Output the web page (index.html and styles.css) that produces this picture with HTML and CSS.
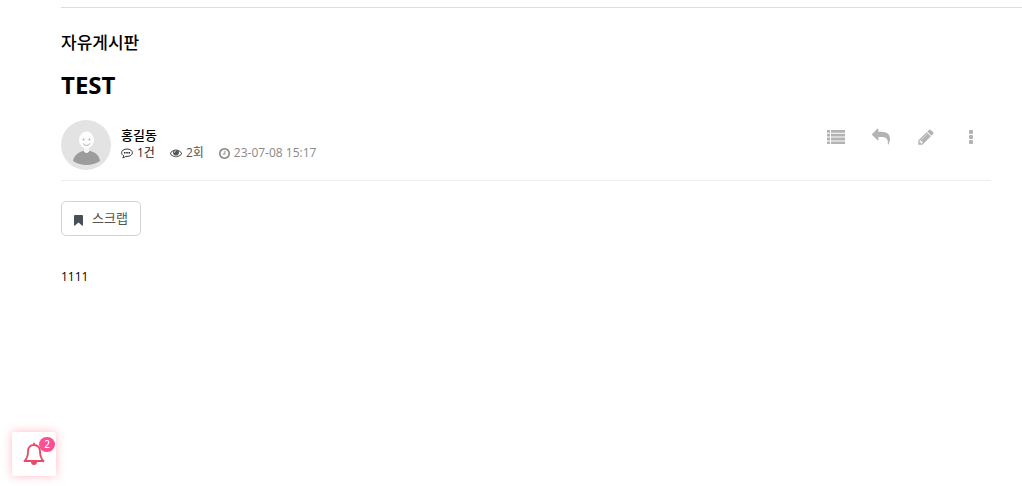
FILE: index.html
```
<!DOCTYPE html>
<html lang="ko">
<head>
<meta charset="utf-8">
<meta name="viewport" content="width=device-width, initial-scale=1">
<title>자유게시판</title>
<link rel="stylesheet" href="styles.css">
</head>
<body>
<main class="page">
  <article class="post">
    <header>
      <h2 class="board-name">자유게시판</h2>
      <h1 class="post-title">TEST</h1>
    </header>
    <section class="post-info">
      <svg class="avatar" viewBox="0 0 50 50" role="img" aria-label="프로필">
        <circle cx="25" cy="25" r="25" fill="#e3e3e3"/>
        <path d="M12 41C13 35 18 32 22 31H29C34 32 38 35 39 41Q33 45 25.500 45T12 41Z" fill="#9c9c9c"/>
        <path d="M23 25h5v6.500q-2.500 3-5 0z" fill="#f6f6f6"/>
        <ellipse cx="25.500" cy="20" rx="7.500" ry="8.500" fill="#fdfdfd"/>
        <circle cx="22.500" cy="19.500" r=".9" fill="#aaa"/><circle cx="28.500" cy="19.500" r=".9" fill="#aaa"/>
        <path d="M22 23.500q3.500 4 7 0" fill="none" stroke="#aaa" stroke-width="1"/>
      </svg>
      <div class="author-block">
        <strong class="author">홍길동</strong>
        <ul class="meta">
          <li class="comments"><svg class="meta-icon" viewBox="0 0 24 24" aria-hidden="true"><path d="M12 4C6 4 1.200 7.200 1.200 11.500c0 2.700 1.800 4.900 4.500 6.200-.3 1.700-1 2.700-2.200 4 2.600-.4 4.700-1.400 6.200-3 .7.200 1.500.2 2.300.2 6 0 10.800-3.200 10.800-7.400S18 4 12 4z" fill="none" stroke="currentColor" stroke-width="1.800"/><path d="M6 10h3v3H6zM10.500 10h3v3h-3zM15 10h3v3h-3z" fill="currentColor"/></svg>1건</li>
          <li class="views"><svg class="meta-icon" viewBox="0 0 1792 1792" aria-hidden="true"><path fill="currentColor" d="M1664 960q-152-236-381-353 61 104 61 225 0 185-131.500 316.500t-316.500 131.500-316.500-131.500-131.500-316.500q0-121 61-225-229 117-381 353 133 205 333.500 326.500t434.500 121.500 434.500-121.500 333.500-326.500zm-720-384q0-20-14-34t-34-14q-125 0-214.500 89.500t-89.500 214.500q0 20 14 34t34 14 34-14 14-34q0-86 61-147t147-61q20 0 34-14t14-34zm848 384q0 34-20 69-140 230-376.500 368.500t-499.500 138.500-499.500-139-376.500-368q-20-35-20-69t20-69q140-229 376.500-368t499.500-139 499.500 139 376.500 368q20 35 20 69z"/></svg>2회</li>
          <li class="date"><svg class="meta-icon meta-icon-clock" viewBox="128 128 1536 1536" aria-hidden="true"><path fill="currentColor" d="M1024 544v448q0 14-9 23t-23 9h-320q-14 0-23-9t-9-23v-64q0-14 9-23t23-9h224v-352q0-14 9-23t23-9h64q14 0 23 9t9 23zm416 352q0-148-73-273t-198-198-273-73-273 73-198 198-73 273 73 273 198 198 273 73 273-73 198-198 73-273zm224 0q0 209-103 385.500t-279.500 279.500-385.500 103-385.500-103-279.500-279.500-103-385.500 103-385.500 279.500-279.500 385.500-103 385.500 103 279.500 279.500 103 385.500z"/></svg><time datetime="2023-07-08T15:17">23-07-08 15:17</time></li>
        </ul>
      </div>
      <nav class="tools" aria-label="게시글 메뉴">
        <a class="tool" href="#list" aria-label="목록"><svg viewBox="0 0 18 18" aria-hidden="true"><path d="M0 2h3v2.800H0zM4 2h14v2.800H4zM0 5.800h3v2.800H0zM4 5.800h14v2.800H4zM0 9.600h3v2.800H0zM4 9.600h14v2.800H4zM0 13.400h3v2.600H0zM4 13.400h14v2.600H4z"/></svg></a>
        <a class="tool" href="#reply" aria-label="답변"><svg viewBox="0 0 1792 1792" aria-hidden="true"><path transform="matrix(-1 0 0 1 1792 0)" d="M1792 640q0 26-19 45l-512 512q-19 19-45 19t-45-19-19-45v-256h-224q-98 0-175.500 6t-154 21.500-133 42.500-105.500 69.500-80 101-48.500 138.500-17.500 181q0 55 5 123 0 6 2.500 23.500t2.500 26.500q0 15-8.500 25t-23.500 10q-16 0-28-17-7-9-13-22t-13.500-30-10.500-24q-127-285-127-451 0-199 53-333 162-403 875-403h224v-256q0-26 19-45t45-19 45 19l512 512q19 19 19 45z"/></svg></a>
        <a class="tool" href="#edit" aria-label="수정"><svg viewBox="0 0 1792 1792" aria-hidden="true"><path d="M491 1536l91-91-235-235-91 91v107h128v128h107zm523-928q0-22-22-22-10 0-17 7l-542 542q-7 7-7 17 0 22 22 22 10 0 17-7l542-542q7-7 7-17zm-54-192l416 416-832 832h-416v-416zm683 96q0 53-37 90l-166 166-416-416 166-165q36-38 90-38 53 0 91 38l235 234q37 39 37 91z"/></svg></a>
        <button class="tool" type="button" aria-label="더보기"><svg viewBox="0 0 18 18" aria-hidden="true"><rect x="7" y="2" width="4" height="4" rx="1"/><rect x="7" y="7" width="4" height="4" rx="1"/><rect x="7" y="12" width="4" height="4" rx="1"/></svg></button>
      </nav>
    </section>
    <a class="scrap" href="#scrap"><svg class="scrap-icon" viewBox="0 0 9 11" aria-hidden="true"><path d="M1 0h7q1 0 1 1v9q0 1-1 .5L4.500 7.500 1 10.500Q0 11 0 10V1Q0 0 1 0z"/></svg>스크랩</a>
    <p class="content">1111</p>
  </article>
</main>
<button class="alarm" type="button" aria-label="알림 2개">
  <svg class="bell" viewBox="0 0 22 24" aria-hidden="true"><path d="M11 1.500v1.500M11 3C7 3 5 6 5 9.500 5 14.500 3.500 17 1.500 19H20.500C18.500 17 17 14.500 17 9.500 17 6 15 3 11 3z" fill="none" stroke="currentColor" stroke-width="1.800" stroke-linejoin="round" stroke-linecap="round"/><path d="M8 19.500h6q0 3.500-3 3.500t-3-3.500z" fill="currentColor"/></svg>
  <span class="badge">2</span>
</button>
</body>
</html>
```
FILE: styles.css
```
* {
  box-sizing: border-box;
}

body {
  margin: 0;
  background: #fff;
  color: #000;
  font-family: "Open Sans", "Noto Sans CJK KR", sans-serif;
  font-size: 12px;
  line-height: 18px;
}

.page {
  margin: 7px 0 0 61px;
  border-top: 1px solid #ddd;
}

.post {
  padding: 23px 31px 0 0;
}

.board-name {
  margin: 0;
  font-size: 17px;
  font-weight: 500;
  line-height: 24px;
}

.post-title {
  margin: 13px 0 18px;
  font-size: 24px;
  font-weight: 700;
  line-height: 34px;
}

.post-info {
  display: flex;
  align-items: flex-start;
  padding-bottom: 10px;
  border-bottom: 1px solid #eee;
}

.avatar {
  width: 50px;
  height: 50px;
  margin-right: 10px;
}

.author-block {
  padding-top: 6px;
}

.author {
  display: block;
  font-size: 13px;
  font-weight: 500;
}

.meta {
  display: flex;
  flex-wrap: wrap;
  gap: 15px;
  margin: 0;
  padding: 0;
  list-style: none;
}

.meta li {
  display: flex;
  align-items: center;
  gap: 4px;
}

.meta-icon {
  width: 12px;
  height: 12px;
}

.meta-icon-clock {
  width: 11px;
  height: 11px;
}

.comments {
  color: #222;
}

.views {
  color: #555;
}

.date {
  color: #888;
}

.tools {
  display: flex;
  gap: 5px;
  margin-left: auto;
}

.tool {
  display: grid;
  place-items: center;
  width: 40px;
  height: 34px;
  padding: 0;
  border: 0;
  background: none;
}

.tool svg {
  width: 18px;
  height: 18px;
  fill: #b3b3b3;
}

.scrap {
  display: inline-flex;
  align-items: center;
  gap: 9px;
  margin-top: 20px;
  padding: 8px 12px;
  border: 1px solid #d3d3d3;
  border-radius: 5px;
  color: #555;
  font-size: 13px;
  text-decoration: none;
  line-height: 17px;
}

.scrap-icon {
  width: 9px;
  height: 11px;
  margin-top: 3px;
  fill: #484f59;
}

.content {
  margin: 32px 0 0;
}

.alarm {
  position: fixed;
  bottom: 10px;
  left: 12px;
  display: grid;
  place-items: center;
  width: 44px;
  height: 44px;
  padding: 0;
  border: 0;
  border-radius: 2px;
  background: #fff;
  box-shadow: 0 0 10px rgba(255, 60, 90, 0.35);
  color: #e64c66;
}

.bell {
  width: 22px;
  height: 24px;
}

.badge {
  position: absolute;
  top: 5px;
  right: 1px;
  width: 16px;
  border-radius: 8px;
  background: #ff4f93;
  color: #fff;
  font-family: "Open Sans", sans-serif;
  font-size: 10px;
  font-weight: 600;
  line-height: 15px;
  text-align: center;
}
```
